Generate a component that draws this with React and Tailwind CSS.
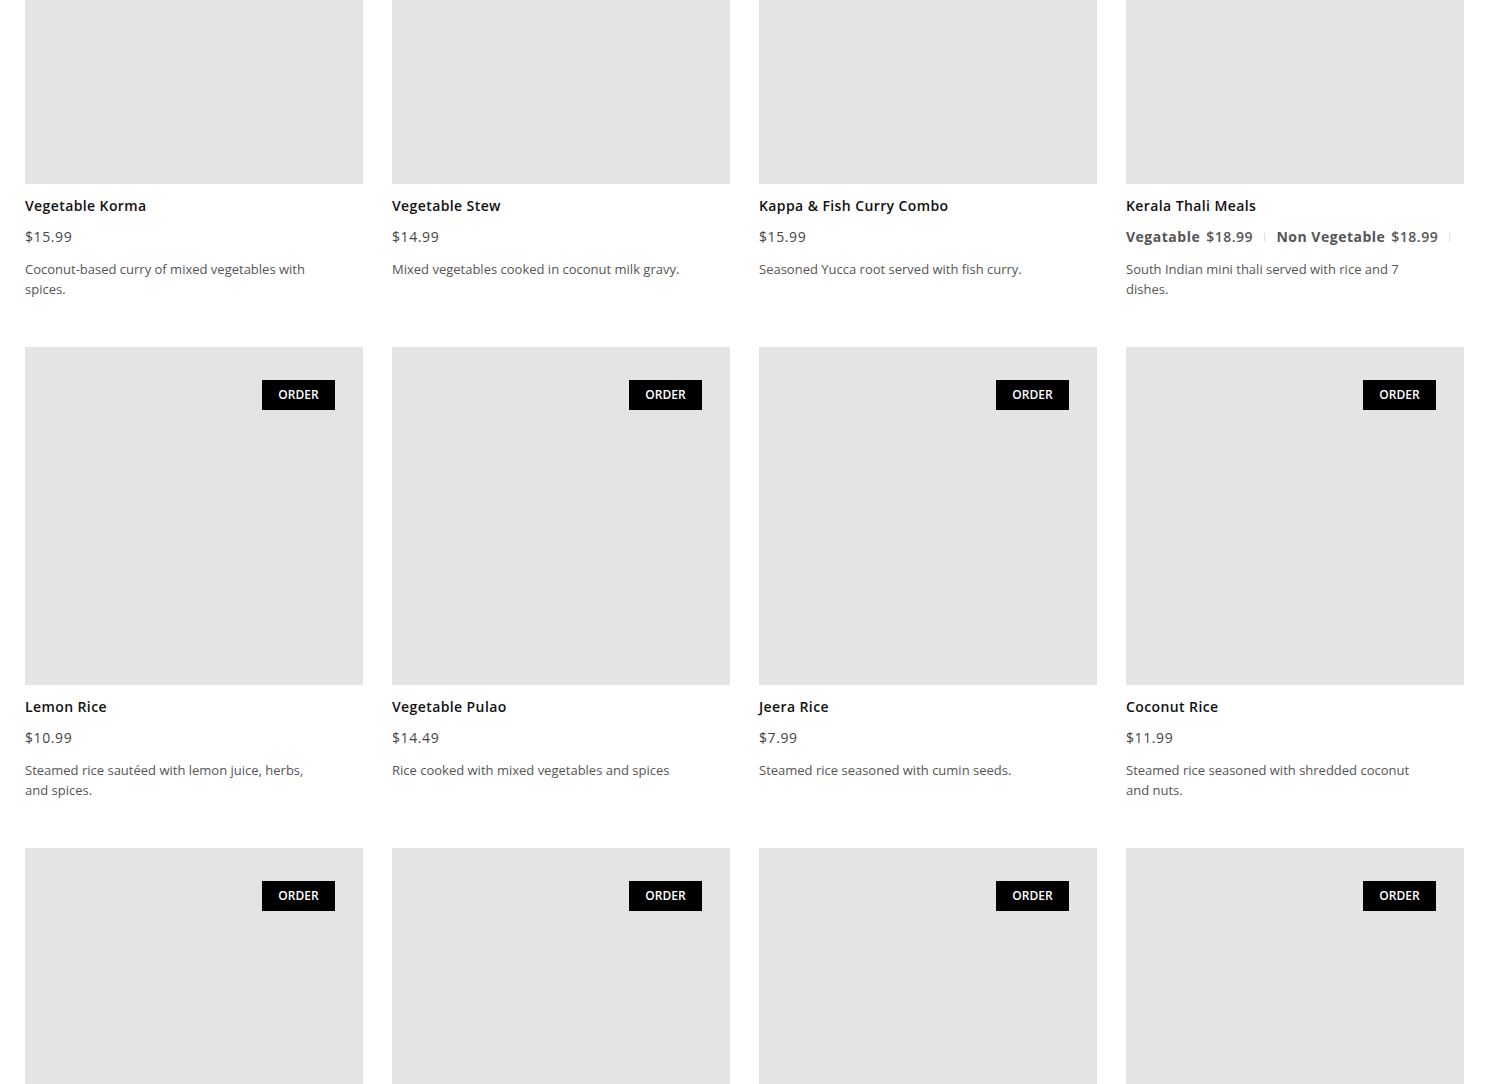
const items = [
  { name: "Vegetable Korma", price: "$15.99", desc: "Coconut-based curry of mixed vegetables with spices." },
  { name: "Vegetable Stew", price: "$14.99", desc: "Mixed vegetables cooked in coconut milk gravy." },
  { name: "Kappa & Fish Curry Combo", price: "$15.99", desc: "Seasoned Yucca root served with fish curry." },
  { name: "Kerala Thali Meals", variants: [["Vegatable", "$18.99"], ["Non Vegetable", "$18.99"]], desc: "South Indian mini thali served with rice and 7 dishes." },
  { name: "Lemon Rice", price: "$10.99", desc: "Steamed rice sautéed with lemon juice, herbs, and spices." },
  { name: "Vegetable Pulao", price: "$14.49", desc: "Rice cooked with mixed vegetables and spices" },
  { name: "Jeera Rice", price: "$7.99", desc: "Steamed rice seasoned with cumin seeds." },
  { name: "Coconut Rice", price: "$11.99", desc: "Steamed rice seasoned with shredded coconut and nuts." },
  { name: "", price: "", desc: "" },
  { name: "", price: "", desc: "" },
  { name: "", price: "", desc: "" },
  { name: "", price: "", desc: "" },
];

function Card({ item, showOrder }) {
  return (
    <div className="flex flex-col">
      <div className="relative w-[338px] h-[338px] bg-[#e4e4e4]">
        {showOrder && (
          <button className="absolute top-[33px] right-[28px] w-[73px] h-[30px] bg-black text-white text-[12px] font-semibold flex items-center justify-center">
            ORDER
          </button>
        )}
      </div>
      {item.name && (
        <div className="flex flex-col">
          <div className="mt-[12px] text-[14px] leading-[20px] font-semibold text-[#111] tracking-[0.4px]">{item.name}</div>
          {item.variants ? (
            <div className="mt-[11px] flex items-center whitespace-nowrap text-[14px] leading-[20px] text-[#555] tracking-[0.5px]">
              {item.variants.map(([v, p], i) => (
                <div key={i} className="flex items-center shrink-0">
                  <span className="font-bold">{v}</span>
                  <span className="ml-[6px] font-semibold">{p}</span>
                  <span className="mx-[9px] text-[9px] text-[#ccc]">|</span>
                </div>
              ))}
            </div>
          ) : (
            <div className="mt-[11px] text-[14px] leading-[20px] text-[#444] tracking-[0.6px]">{item.price}</div>
          )}
          <div className="mt-[12px] max-w-[292px] text-[13px] leading-[20px] text-[#555] min-h-[40px]">{item.desc}</div>
        </div>
      )}
    </div>
  );
}

export default function App() {
  return (
    <div className="bg-white h-[1084px] overflow-hidden" style={{ fontFamily: '"Open Sans", sans-serif' }}>
      <div className="-mt-[154px] pl-[25px] grid grid-cols-[repeat(4,338px)] gap-x-[29px] gap-y-[48px]">
        {items.map((it, i) => (
          <Card key={i} item={it} showOrder={i >= 4} />
        ))}
      </div>
    </div>
  );
}
